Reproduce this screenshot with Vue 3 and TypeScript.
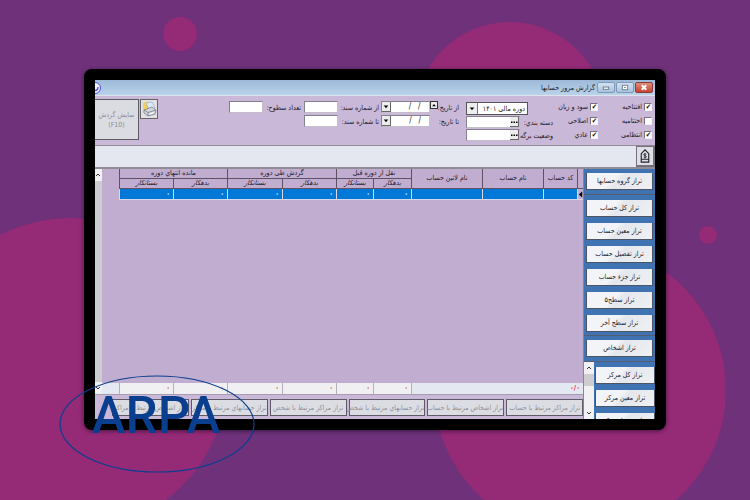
<script setup lang="ts">
import { ref } from 'vue'

interface Check {
  id: string
  label: string
  on: boolean
}

const kinds = ref<Check[][]>([
  [
    { id: 'opening', label: 'افتتاحیه', on: true },
    { id: 'closing', label: 'اختتامیه', on: false },
    { id: 'memo', label: 'انتظامی', on: true },
  ],
  [
    { id: 'profit', label: 'سود و زیان', on: true },
    { id: 'adjust', label: 'اصلاحی', on: true },
    { id: 'normal', label: 'عادي', on: true },
  ],
])

const dates = [
  { id: 'from-date', label: 'از تاریخ:', spin: true },
  { id: 'to-date', label: 'تا تاریخ:', spin: false },
]
const lookups = [
  { id: 'category', label: 'دسته بندي:' },
  { id: 'sheet', label: 'وضعیت برگه' },
]
const documents = [
  { id: 'from-doc', label: 'از شماره سند:' },
  { id: 'to-doc', label: 'تا شماره سند:' },
]

const columns = [6, 34, 61, 71, 38, 37, 54, 55, 54, 54]
const names = ['کد حساب', 'نام حساب', 'نام لاتین حساب']
const groups = ['نقل از دوره قبل', 'گردش طی دوره', 'مانده انتهاي دوره']

const levels = [
  'تراز کل حساب',
  'تراز معین حساب',
  'تراز تفصیل حساب',
  'تراز جزء حساب',
  'تراز سطح۵',
  'تراز سطح آخر',
]
const centers = ['تراز کل مرکز', 'تراز معین مرکز', 'تراز تفصیل مرکز']
const related = [
  'تراز مراکز مرتبط با حساب',
  'تراز اشخاص مرتبط با حساب',
  'تراز حسابهاي مرتبط با شخص',
  'تراز مراکز مرتبط با شخص',
  'تراز حسابهاي مرتبط با مرکز',
  'تراز اشخاص مرتبط با مراکز',
]
</script>

<template>
  <div class="page">
    <svg class="backdrop" viewBox="0 0 750 500" preserveAspectRatio="xMidYMid slice" aria-hidden="true">
      <circle cx="180" cy="34" r="17" />
      <circle cx="510" cy="117" r="95" />
      <circle cx="71" cy="375" r="157" />
      <circle cx="580" cy="390" r="146" />
      <circle cx="708" cy="235" r="9" />
    </svg>

    <div class="frame">
      <main class="screen" dir="rtl">
        <header class="titlebar">
          <div class="controls">
            <button type="button" class="wbtn close" aria-label="بستن">
              <svg viewBox="0 0 16 10"><path d="M5.5 2.5l5 5M10.5 2.5l-5 5" stroke="#fff" stroke-width="2.2" /></svg>
            </button>
            <button type="button" class="wbtn" aria-label="بزرگ">
              <svg viewBox="0 0 16 10"><rect x="5" y="2.5" width="6" height="5" fill="#fff" stroke="#66788c" /><path d="M7 5h2" stroke="#66788c" /></svg>
            </button>
            <button type="button" class="wbtn" aria-label="کوچک">
              <svg viewBox="0 0 16 10"><rect x="5" y="4.5" width="6" height="2.5" fill="#fff" stroke="#66788c" /></svg>
            </button>
          </div>
          <h1>گزارش مرور حسابها</h1>
          <svg class="app-icon" viewBox="0 0 7 12" aria-hidden="true">
            <circle cx="0" cy="6" r="5.5" fill="#f3f4ff" stroke="#4a50d8" />
            <path d="M0 8.5c2 0 3-1 3-3.5" fill="none" stroke="#4a50d8" stroke-width="1.4" />
          </svg>
        </header>

        <form class="filters" @submit.prevent>
          <div v-for="(col, i) in kinds" :key="i" class="checks" :class="{ narrow: i === 1 }">
            <label v-for="c in col" :key="c.id" class="check">
              <input v-model="c.on" type="checkbox" />
              <span>{{ c.label }}</span>
            </label>
          </div>

          <div class="stack lookups">
            <div class="period">
              <select aria-label="دوره مالی">
                <option>دوره مالی ۱۴۰۱</option>
              </select>
              <svg class="chev" viewBox="0 0 11 11" aria-hidden="true"><path d="M3 4.5h5l-2.5 3z" /></svg>
            </div>
            <div v-for="l in lookups" :key="l.id" class="row">
              <label :for="l.id">{{ l.label }}</label>
              <span class="field lookup">
                <button type="button" :aria-label="l.label">
                  <svg viewBox="0 0 8 8"><path d="M1 4h1.5v1.5H1zM3.5 4H5v1.5H3.5zM6 4h1.5v1.5H6z" /></svg>
                </button>
                <input :id="l.id" type="text" />
              </span>
            </div>
          </div>

          <div class="stack dates">
            <div v-for="d in dates" :key="d.id" class="row">
              <label :for="d.id">{{ d.label }}</label>
              <span class="entry">
                <button v-if="d.spin" type="button" class="spin" aria-label="افزایش">
                  <svg viewBox="0 0 8 8"><path d="M1.5 5.5h5L4 2.5z" /></svg>
                </button>
                <span class="field date">
                  <input :id="d.id" type="text" value="/   /" dir="ltr" />
                  <button type="button" class="drop" :aria-label="d.label">
                    <svg viewBox="0 0 9 9"><path d="M2 3.5h5l-2.5 3z" /></svg>
                  </button>
                </span>
              </span>
            </div>
          </div>

          <div class="stack documents">
            <div v-for="d in documents" :key="d.id" class="row">
              <label :for="d.id">{{ d.label }}</label>
              <span class="field number"><input :id="d.id" type="text" /></span>
            </div>
          </div>

          <div class="stack depth">
            <div class="row">
              <label for="depth">تعداد سطوح:</label>
              <span class="field number"><input id="depth" type="text" /></span>
            </div>
          </div>

          <div class="actions">
            <button type="button" class="print" aria-label="چاپ">
              <svg viewBox="0 0 16 18">
                <path d="M2 2.5l5-1 2 1v10H2z" fill="#f3cf5c" />
                <path d="M5 3l6-1 3 6-6 2z" fill="#dcebfa" stroke="#8aa4c4" stroke-width=".6" />
                <path d="M3 10l8-3 4 3-1 4-7 2-4-3z" fill="#d4d7dc" stroke="#6d737d" stroke-width=".7" />
                <path d="M3 10l4 2.5 8-2.5M7 12.5V16" fill="none" stroke="#6d737d" stroke-width=".7" />
                <path d="M8.5 14l4.5-1.3" stroke="#fff" />
              </svg>
            </button>
            <button type="button" class="show" disabled>نمایش گردش<br /><bdi>(F10)</bdi></button>
          </div>
        </form>

        <div class="strip">
          <button type="button" class="tag" aria-label="حساب">
            <svg viewBox="0 0 17 18">
              <path d="M4.5 12.5V6.5L8.5 2.5l4 4v6zM4.5 15.5h8v-3h-8z" fill="none" stroke="#222" stroke-width="1.2" />
              <path d="M10 7.2c-.7-.8-3-.7-3 .5s3 .8 3 2-2.3 1.3-3 .4M8.5 6v5.5" fill="none" stroke="#222" stroke-width=".9" />
            </svg>
          </button>
        </div>

        <div class="body">
          <nav class="side">
            <div class="block">
              <button type="button">تراز گروه حسابها</button>
            </div>
            <div class="block levels">
              <button v-for="l in levels" :key="l" type="button">{{ l }}</button>
            </div>
            <div class="block">
              <button type="button">تراز اشخاص</button>
            </div>
            <div class="centers">
              <div class="block">
                <button v-for="c in centers" :key="c" type="button">{{ c }}</button>
              </div>
              <div class="scroll small" aria-hidden="true">
                <svg viewBox="0 0 8 8"><path d="M2 5l2-2 2 2" /></svg>
                <i class="thumb"></i>
                <svg viewBox="0 0 8 8"><path d="M2 3l2 2 2-2" /></svg>
              </div>
            </div>
          </nav>

          <section class="content">
            <div class="sheet">
              <table>
                <colgroup>
                  <col v-for="(w, i) in columns" :key="i" :style="{ width: w + 'px' }" />
                </colgroup>
                <thead>
                  <tr>
                    <th rowspan="2"></th>
                    <th v-for="n in names" :key="n" rowspan="2">{{ n }}</th>
                    <th v-for="g in groups" :key="g" colspan="2">{{ g }}</th>
                  </tr>
                  <tr>
                    <template v-for="g in groups" :key="g">
                      <th class="sub">بدهکار</th>
                      <th class="sub">بستانکار</th>
                    </template>
                  </tr>
                </thead>
                <tbody>
                  <tr class="current">
                    <td class="mark"><svg viewBox="0 0 6 9"><path d="M5 1v7L1 4.5z" /></svg></td>
                    <td></td>
                    <td></td>
                    <td></td>
                    <td v-for="n in 6" :key="n" class="num">۰</td>
                  </tr>
                  <tr class="blank"><td colspan="10"></td></tr>
                </tbody>
                <tfoot>
                  <tr>
                    <td colspan="4" class="count">۰/۰</td>
                    <td v-for="n in 6" :key="n" class="num">۰</td>
                  </tr>
                </tfoot>
              </table>
              <div class="gutter"></div>
              <div class="scroll" aria-hidden="true">
                <svg viewBox="0 0 8 8"><path d="M2 5l2-2 2 2" /></svg>
                <i class="thumb"></i>
                <svg viewBox="0 0 8 8"><path d="M2 3l2 2 2-2" /></svg>
              </div>
            </div>
            <div class="related">
              <button v-for="r in related" :key="r" type="button" disabled>{{ r }}</button>
            </div>
          </section>
        </div>
      </main>

      <svg class="logo" viewBox="0 0 196 98" role="img" aria-label="ARPA">
        <ellipse cx="98" cy="49" rx="97" ry="48" />
        <text x="97" y="58" text-anchor="middle">ARPA</text>
      </svg>
    </div>
  </div>
</template>

<style>
body {
  margin: 0;
}
</style>

<style scoped>
* {
  box-sizing: border-box;
}
.page {
  position: relative;
  display: flex;
  min-height: 100vh;
  padding: 69px 84px 70px;
  background: #6f3179;
  color: #1c1722;
  font: 7px/10px 'DejaVu Sans Condensed', 'DejaVu Sans', sans-serif;
  overflow: hidden;
}
.backdrop {
  position: absolute;
  inset: 0;
  width: 100%;
  height: 100%;
  fill: #952a76;
}
button,
input,
select {
  margin: 0;
  padding: 0;
  border: 0;
  border-radius: 0;
  font: inherit;
  color: inherit;
}
svg {
  display: block;
}
.frame {
  position: relative;
  display: flex;
  flex: 1;
  min-width: 0;
  padding: 11px;
  border-radius: 8px;
  background: #000;
  box-shadow: 0 1px 4px rgba(20, 0, 30, 0.6);
}
.screen {
  display: flex;
  flex: 1;
  flex-direction: column;
  min-width: 0;
  background: #c9b8d7;
  overflow: hidden;
}
.titlebar {
  display: flex;
  align-items: center;
  gap: 2px;
  height: 16px;
  padding-right: 2px;
  background: linear-gradient(#9db9d8, #b9d3ea);
  border-bottom: 1px solid #dfe3ee;
}
.controls {
  display: flex;
  gap: 1px;
}
.wbtn {
  width: 18px;
  height: 11px;
  border: 1px solid #7f9ab8;
  border-radius: 2px;
  background: linear-gradient(#d3e2f1, #a9c3de);
}
.wbtn.close {
  border-color: #8a3b36;
  background: linear-gradient(#e08d7c, #c9422e);
}
.wbtn svg {
  width: 100%;
  height: 100%;
}
h1 {
  flex: 1;
  margin: 0;
  font-size: 7px;
  font-weight: 400;
}
.app-icon {
  width: 7px;
  height: 12px;
}
.filters {
  display: flex;
  height: 49px;
  padding: 3px 3px 0 0;
  white-space: nowrap;
}
.checks {
  display: flex;
  flex-direction: column;
  gap: 4px;
  width: 54px;
  padding-top: 3px;
}
.checks.narrow {
  width: 45px;
}
.check {
  display: flex;
  align-items: center;
  gap: 2px;
}
.check input {
  appearance: none;
  display: grid;
  flex: none;
  width: 8px;
  height: 8px;
  border: 1px solid;
  border-color: #77717f #f4f0f8 #f4f0f8 #77717f;
  background: #fff;
}
.check input:checked::before {
  content: '✔';
  font-size: 7px;
  line-height: 6px;
  color: #111;
}
.stack {
  display: flex;
  flex-direction: column;
  gap: 2px;
  padding-top: 2px;
}
.row {
  display: flex;
  justify-content: space-between;
  height: 12px;
}
.row label {
  padding-top: 2px;
}
.lookups {
  gap: 1px;
  width: 87px;
  padding-top: 3px;
}
.period {
  position: relative;
  align-self: flex-end;
  width: 62px;
  height: 13px;
}
.period select {
  appearance: none;
  width: 100%;
  height: 100%;
  padding: 0 2px 0 12px;
  border: 1px solid #555;
  background: #fff;
  line-height: 10px;
}
.chev {
  position: absolute;
  left: 1px;
  top: 1px;
  width: 11px;
  height: 11px;
  background: #eee;
  border-right: 1px solid #777;
  pointer-events: none;
}
.field {
  display: flex;
  flex: none;
  border: 1px solid #858090;
  border-right-color: #c4bdca;
  border-bottom-color: #c4bdca;
  background: #fff;
}
.field input {
  flex: 1;
  min-width: 0;
  height: 10px;
  background: transparent;
}
.field button {
  flex: none;
  width: 9px;
  height: 10px;
  border: solid #666;
  border-width: 0 1px 1px 0;
  background: #ececec;
}
.field button svg,
.spin svg {
  width: 100%;
  height: 100%;
}
.lookup {
  width: 54px;
}
.dates {
  width: 78px;
  margin-right: 7px;
}
.entry {
  display: flex;
  flex: none;
}
.date {
  width: 49px;
}
.date input {
  padding-right: 8px;
  font-size: 8px;
  text-align: right;
}
.spin {
  width: 8px;
  height: 8px;
  border: 1px solid #333;
  background: #eee;
}
.documents {
  width: 75px;
  margin-right: 2px;
}
.depth {
  width: 72px;
  margin-right: 3px;
}
.number {
  width: 34px;
}
.actions {
  display: flex;
  align-items: flex-start;
  gap: 1px;
  margin-right: auto;
}
.print {
  width: 18px;
  height: 20px;
  border: 1px solid #666;
  background: #e3e1e8;
}
.print svg {
  width: 16px;
  height: 18px;
}
.show {
  width: 44px;
  height: 41px;
  border: 1px solid #5f5b66;
  border-left: 0;
  background: #dadce2;
  color: #8d8e96;
}
.strip {
  height: 24px;
  border: solid #8f8c96;
  border-width: 1px 0 2px;
  background: #e4e6f0;
}
.tag {
  width: 19px;
  height: 21px;
  border: 2px solid #73707a;
  border-width: 1px 2px 2px 1px;
  background: #dfe0e7;
}
.tag svg {
  width: 16px;
  height: 18px;
}
.body {
  display: flex;
  flex: 1 1 0;
  min-height: 250px;
}
.side {
  display: flex;
  flex-direction: column;
  width: 71px;
  background: #3f73b2;
  overflow: hidden;
}
.block {
  display: flex;
  flex-direction: column;
  gap: 6px;
  padding: 4px 2px;
  border-bottom: 1px solid #555d6e;
}
.block.levels {
  padding: 5px 2px 3px;
}
.block button {
  flex: none;
  height: 17px;
  border: 1px solid #4c5565;
  border-width: 0 1px 1px;
  background: linear-gradient(135deg, #f3f4f7 40%, #e4e7ec 50%, #eff1f4);
  white-space: nowrap;
}
.centers {
  display: flex;
  flex: 1 1 0;
  min-height: 0;
}
.centers .block {
  flex: 1;
  min-width: 0;
  padding: 5px 0 0 1px;
  border: 0;
}
.scroll {
  display: flex;
  flex-direction: column;
  align-items: center;
  width: 7px;
  background: #f1f0f3;
  overflow: hidden;
}
.scroll svg {
  flex: none;
  width: 8px;
  height: 12px;
  fill: none;
  stroke: #333;
}
.thumb {
  flex: 1;
  width: 100%;
  background: #cdccd0;
}
.scroll.small {
  width: 10px;
}
.small .thumb {
  flex: none;
  height: 12px;
  margin-bottom: auto;
}
.content {
  display: flex;
  flex: 1;
  flex-direction: column;
  min-width: 0;
  border-right: 1px solid #8b8394;
}
.sheet {
  display: flex;
  flex: 1;
  background: #c1add0;
}
table {
  flex: 1;
  width: 0;
  min-width: 0;
  table-layout: fixed;
  border-collapse: separate;
  border-spacing: 0;
}
th,
td {
  height: 10px;
  padding: 0;
  font-weight: 400;
  line-height: 9px;
  white-space: nowrap;
}
th {
  border-left: 1px solid #5d5266;
  border-bottom: 1px solid #5d5266;
}
.sub {
  font-style: italic;
}
.current td {
  height: 11px;
  border-left: 1px solid #d8d8e8;
  border-bottom: 1px solid #d8d8e8;
  background: #0078d7;
  color: #fff;
}
.current .mark {
  background: #c1add0;
}
.mark svg {
  width: 5px;
  height: 9px;
}
.blank td {
  height: auto;
}
tfoot td {
  height: 11px;
  border-left: 1px solid #b5b1ba;
  background: #f0eff1;
  color: #c33;
}
.num {
  direction: ltr;
  padding-right: 2px;
  font-weight: 700;
  text-align: right;
}
tfoot .count {
  padding-right: 3px;
  background: #e4e8f1;
  color: #f02040;
  font-weight: 700;
}
.gutter {
  align-self: flex-end;
  width: 18px;
  height: 11px;
  background: #e4e8f1;
}
.related {
  display: flex;
  gap: 2px;
  height: 25px;
  padding: 4px 0 3px 17px;
  border-top: 1px solid #a79bb2;
}
.related button {
  flex: 1 1 0;
  min-width: 0;
  border: 1px solid #5f5b66;
  background: #dcdde3;
  color: #8d8e96;
  white-space: nowrap;
}
.logo {
  position: absolute;
  left: -25px;
  bottom: -43px;
  width: 196px;
  height: 98px;
}
.logo ellipse {
  fill: none;
  stroke: #0a3f8f;
  stroke-width: 1.2;
}
.logo text {
  fill: #0a3f8f;
  font: 500 51px Roboto, sans-serif;
}
</style>
